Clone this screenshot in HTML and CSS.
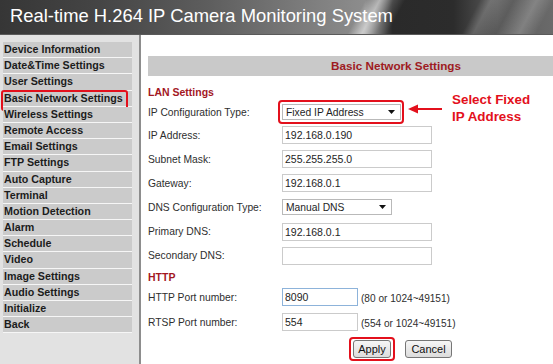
FILE: index.html
```html
<!DOCTYPE html>
<html lang="en">
<head>
<meta charset="utf-8">
<title>Basic Network Settings</title>
<link rel="stylesheet" href="styles.css">
</head>
<body>
<header class="header">
  <h1 class="title">Real-time H.264 IP Camera Monitoring System</h1>
</header>
<div class="layout">
  <nav class="sidebar">
    <ul class="menu">
      <li class="menu-item">Device Information</li>
      <li class="menu-item">Date&amp;Time Settings</li>
      <li class="menu-item">User Settings</li>
      <li class="menu-item is-marked">Basic Network Settings</li>
      <li class="menu-item">Wireless Settings</li>
      <li class="menu-item">Remote Access</li>
      <li class="menu-item">Email Settings</li>
      <li class="menu-item">FTP Settings</li>
      <li class="menu-item">Auto Capture</li>
      <li class="menu-item">Terminal</li>
      <li class="menu-item">Motion Detection</li>
      <li class="menu-item">Alarm</li>
      <li class="menu-item">Schedule</li>
      <li class="menu-item">Video</li>
      <li class="menu-item">Image Settings</li>
      <li class="menu-item">Audio Settings</li>
      <li class="menu-item">Initialize</li>
      <li class="menu-item">Back</li>
    </ul>
  </nav>
  <main class="main">
    <div class="bar">Basic Network Settings</div>
    <div class="section-title section-lan">LAN Settings</div>
    <div class="row">
      <span class="label">IP Configuration Type:</span>
      <div class="field">
        <span class="marked-box">
          <span class="select select-ip"><span class="select-text">Fixed IP Address</span><svg class="caret" width="7" height="4" viewBox="0 0 7 4"><path d="M0 0H7L3.5 4Z" fill="#111"/></svg></span>
        </span>
        <span class="callout">
          <svg class="arrow" width="34" height="10" viewBox="0 0 34 10"><path d="M9 4H34V6H9Z" fill="#e3101c"/><path d="M0 5L10 0.5V9.5Z" fill="#e3101c"/></svg>
          <span class="callout-text">Select Fixed<br>IP Address</span>
        </span>
      </div>
    </div>
    <div class="row">
      <span class="label">IP Address:</span>
      <div class="field"><span class="input input-wide">192.168.0.190</span></div>
    </div>
    <div class="row">
      <span class="label">Subnet Mask:</span>
      <div class="field"><span class="input input-wide">255.255.255.0</span></div>
    </div>
    <div class="row">
      <span class="label">Gateway:</span>
      <div class="field"><span class="input input-wide">192.168.0.1</span></div>
    </div>
    <div class="row">
      <span class="label">DNS Configuration Type:</span>
      <div class="field">
        <span class="select select-dns"><span class="select-text">Manual DNS</span><svg class="caret" width="7" height="4" viewBox="0 0 7 4"><path d="M0 0H7L3.5 4Z" fill="#111"/></svg></span>
      </div>
    </div>
    <div class="row">
      <span class="label">Primary DNS:</span>
      <div class="field"><span class="input input-wide">192.168.0.1</span></div>
    </div>
    <div class="row">
      <span class="label">Secondary DNS:</span>
      <div class="field"><span class="input input-wide"></span></div>
    </div>
    <div class="section-title section-http">HTTP</div>
    <div class="ports">
      <div class="row row-port">
        <span class="label">HTTP Port number:</span>
        <div class="field"><span class="input input-port is-focused">8090</span><span class="hint">(80 or 1024~49151)</span></div>
      </div>
      <div class="row row-port">
        <span class="label">RTSP Port number:</span>
        <div class="field"><span class="input input-port">554</span><span class="hint">(554 or 1024~49151)</span></div>
      </div>
    </div>
    <div class="actions">
      <span class="marked-box marked-btn"><button class="btn btn-apply" type="button">Apply</button></span>
      <button class="btn btn-cancel" type="button">Cancel</button>
    </div>
  </main>
</div>
</body>
</html>
```

FILE: styles.css
```css
* { box-sizing: border-box; }

html, body {
  margin: 0;
  padding: 0;
  width: 553px;
  height: 364px;
  overflow: hidden;
  background: #ffffff;
  font-family: "Liberation Sans", Arial, sans-serif;
}

.header {
  height: 35px;
  padding-left: 10px;
  display: flex;
  align-items: center;
  background:
    linear-gradient(118deg, transparent 0%, transparent 64%, rgba(255,255,255,0.55) 66.5%, rgba(255,255,255,0.15) 69%, transparent 71%),
    linear-gradient(118deg, transparent 0%, transparent 84%, rgba(255,255,255,0.18) 86%, transparent 90%, rgba(255,255,255,0.2) 94%, transparent 97%),
    linear-gradient(90deg, #363636 0%, #454545 18%, #5e5e5e 38%, #7c7c7c 55%, #8d8d8d 66%, #2a2a2a 71%, #2c2c2c 82%, #5a5a5a 90%, #6a6a6a 100%);
  border-bottom: 1px solid #5a5a5a;
}

.title {
  margin: 0;
  font-weight: normal;
  font-size: 18.4px;
  color: #ffffff;
  line-height: 1;
  padding-bottom: 2px;
}

.layout {
  display: flex;
  height: 329px;
}

.sidebar {
  width: 141px;
  flex: none;
  background: #e2e2e2;
  border-right: 2px solid #8d8d8d;
  padding: 7px 7px 0 3px;
}

.menu {
  list-style: none;
  margin: 0;
  padding: 0;
}

.menu-item {
  position: relative;
  height: 16.2px;
  line-height: 15.2px;
  border-bottom: 1px solid #f6f6f6;
  background: #cbcbcb;
  color: #1c1c1c;
  font-weight: bold;
  font-size: 10.7px;
  padding-left: 1px;
  white-space: nowrap;
}

.menu-item.is-marked::after {
  content: "";
  position: absolute;
  left: -2px;
  top: -1px;
  width: 123px;
  height: 17px;
  border: 2px solid #e3101c;
  border-radius: 3px;
}

.main {
  flex: 1;
  min-width: 0;
  padding: 21px 0 0 7px;
}

.bar {
  height: 20px;
  padding-left: 91px;
  background: #c9c9c9;
  color: #9e1b22;
  font-weight: bold;
  font-size: 11.7px;
  line-height: 20px;
  text-align: center;
  white-space: nowrap;
}

.section-title {
  height: 14px;
  line-height: 14px;
  color: #a3171f;
  font-weight: bold;
  font-size: 10.5px;
}

.section-lan { margin-top: 9px; }
.section-http { margin-top: 2px; }

.row {
  display: grid;
  grid-template-columns: 134px auto;
  align-items: center;
  height: 24.1px;
}

.ports { margin-top: 1px; }
.row-port { height: 25px; }

.label {
  font-size: 10.3px;
  color: #2e2e2e;
  white-space: nowrap;
}

.field {
  display: flex;
  align-items: center;
  white-space: nowrap;
}

.input {
  display: block;
  height: 18px;
  line-height: 16px;
  border: 1px solid #cbcbcb;
  background: #ffffff;
  padding: 0 2px;
  font-size: 10.5px;
  color: #1e1e1e;
}

.input-wide { width: 150px; }
.input-port { width: 76px; }
.input.is-focused { border-color: #8db3da; }

.hint {
  margin-left: 3px;
  padding-top: 3px;
  font-size: 10.1px;
  color: #2e2e2e;
}

.select {
  display: flex;
  align-items: center;
  justify-content: space-between;
  height: 16px;
  border: 1px solid #b9b9b9;
  background: #ffffff;
  padding: 0 5px 0 3px;
  font-size: 10.3px;
  color: #1e1e1e;
}

.select-ip { width: 119px; }
.select-dns { width: 110px; }

.caret { display: block; }

.marked-box {
  position: relative;
  display: block;
}

.marked-box::after {
  content: "";
  position: absolute;
  left: -4px;
  right: -3px;
  top: -4px;
  bottom: -4px;
  border: 2px solid #e3101c;
  border-radius: 4px;
}

.marked-btn::after {
  left: -4px;
  right: -4px;
  top: -3px;
  bottom: -3px;
}

.callout {
  display: flex;
  align-items: center;
  margin-left: 7px;
  margin-top: -8px;
}

.arrow {
  display: block;
  margin-top: 2px;
}

.callout-text {
  margin-left: 10px;
  color: #e3101c;
  font-weight: bold;
  font-size: 13.4px;
  line-height: 17px;
  white-space: nowrap;
}

.actions {
  display: flex;
  align-items: center;
  gap: 14px;
  margin-top: 5px;
  padding-left: 205px;
}

.btn {
  display: block;
  height: 18px;
  padding: 0;
  border: 1px solid #767676;
  border-radius: 3px;
  background: linear-gradient(#f6f6f6, #dcdcdc);
  font-family: "Liberation Sans", Arial, sans-serif;
  font-size: 11px;
  color: #111111;
  line-height: 16px;
}

.btn-apply { width: 38px; }
.btn-cancel { width: 47px; }
```
